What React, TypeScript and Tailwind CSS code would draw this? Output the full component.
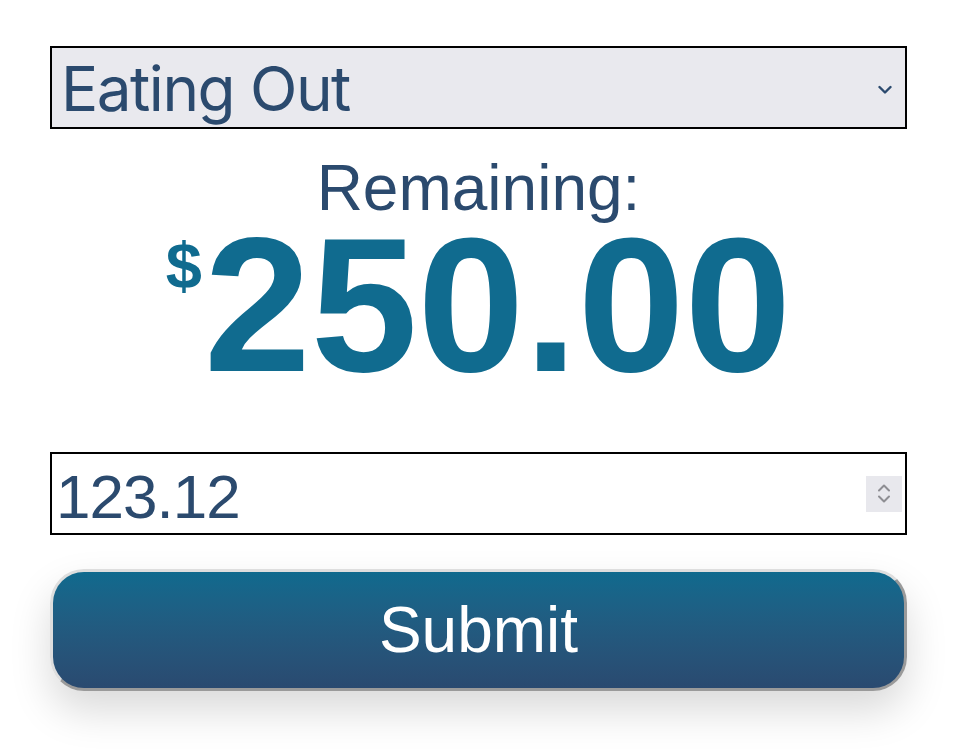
import { useState } from 'react';

export default function App() {
    const [amount, setAmount] = useState('123.12');

    return (
        <div className="min-h-screen bg-white pl-[50px] pr-[57px] pt-[46px] font-['Liberation_Sans',Arial,sans-serif]">
            {/* Category picker */}
            <div
                role="combobox"
                className="flex items-start justify-between h-[83px] border-2 border-black bg-[#e9e9ee] pl-[9px] pr-[13px] pt-[10px]"
            >
                <span className="text-[62px] leading-[62px] tracking-[-1.5px] text-[#2b4a6e] font-['Inter',sans-serif]">Eating Out</span>
                <svg className="mt-[27px]" width="14" height="10" viewBox="0 0 14 10" fill="none">
                    <path d="M1.5 2 L7 7.5 L12.5 2" stroke="#2b4a6e" strokeWidth="2.4" strokeLinecap="round" strokeLinejoin="round" />
                </svg>
            </div>

            {/* Remaining */}
            <div className="mt-[27px] text-center text-[64px] leading-[64px] text-[#2b4a6e]">Remaining:</div>
            <div className="flex justify-center items-start text-[#106b8f] font-bold">
                <span className="mt-[13px] mr-[2px] text-[65px] leading-none">$</span>
                <span className="text-[192px] leading-[170px]">250.00</span>
            </div>

            {/* Amount input */}
            <div className="mt-[62px] flex items-center h-[83px] border-2 border-black bg-white pl-[4px] pr-[3px]">
                <input
                    value={amount}
                    onChange={(e) => setAmount(e.target.value)}
                    inputMode="decimal"
                    className="flex-1 min-w-0 h-[79px] pt-[6px] bg-transparent text-[62px] leading-none tracking-[-1px] text-[#2b4a6e] outline-none"
                />
                <div className="flex flex-col items-center justify-center gap-[3px] w-[36px] h-[36px] bg-[#e8e8ed]">
                    <svg width="14" height="8" viewBox="0 0 14 8" fill="none">
                        <path d="M2 6.5 L7 1.5 L12 6.5" stroke="#8e8e93" strokeWidth="2" strokeLinecap="round" strokeLinejoin="round" />
                    </svg>
                    <svg width="14" height="8" viewBox="0 0 14 8" fill="none">
                        <path d="M2 1.5 L7 6.5 L12 1.5" stroke="#8e8e93" strokeWidth="2" strokeLinecap="round" strokeLinejoin="round" />
                    </svg>
                </div>
            </div>

            {/* Submit */}
            <button className="mt-[34px] block w-full h-[122px] rounded-[34px] border-[3px] border-t-[#dedede] border-l-[#dedede] border-r-[#9a9a9a] border-b-[#9a9a9a] bg-gradient-to-b from-[#0f6a8e] to-[#2a4a70] text-[64px] leading-none text-white shadow-[0_20px_40px_rgba(0,0,0,0.15)]">
                Submit
            </button>
        </div>
    );
}
